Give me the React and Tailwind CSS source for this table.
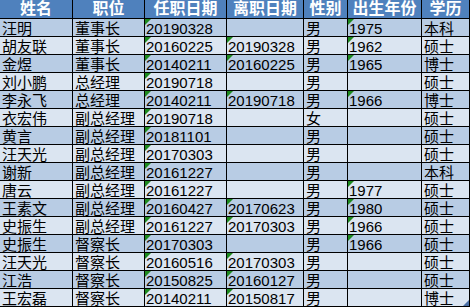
const headers = ['姓名', '职位', '任职日期', '离职日期', '性别', '出生年份', '学历']

const rows = [
  ['汪明', '董事长', '20190328', '', '男', '1975', '本科'],
  ['胡友联', '董事长', '20160225', '20190328', '男', '1962', '硕士'],
  ['金煜', '董事长', '20140211', '20160225', '男', '1965', '博士'],
  ['刘小鹏', '总经理', '20190718', '', '男', '', '硕士'],
  ['李永飞', '总经理', '20140211', '20190718', '男', '1966', '博士'],
  ['衣宏伟', '副总经理', '20190718', '', '女', '', '硕士'],
  ['黄言', '副总经理', '20181101', '', '男', '', '硕士'],
  ['汪天光', '副总经理', '20170303', '', '男', '', '硕士'],
  ['谢新', '副总经理', '20161227', '', '男', '', '本科'],
  ['唐云', '副总经理', '20161227', '', '男', '1977', '硕士'],
  ['王素文', '副总经理', '20160427', '20170623', '男', '1980', '硕士'],
  ['史振生', '副总经理', '20161227', '20170303', '男', '1966', '硕士'],
  ['史振生', '督察长', '20170303', '', '男', '1966', '硕士'],
  ['汪天光', '督察长', '20160516', '20170303', '男', '', '硕士'],
  ['江浩', '督察长', '20150825', '20160127', '男', '', '硕士'],
  ['王宏磊', '督察长', '20140211', '20150817', '男', '', '博士'],
]

// number-as-text columns get the little green marker
const textNumCols = [2, 3, 5]

const Flag = () => (
  <svg className="absolute left-0 top-0" width="6" height="6" viewBox="0 0 6 6">
    <polygon points="0,0 6,0 0,6" fill="#1e8a1e" />
  </svg>
)

export default function App() {
  return (
    <div className="relative w-[471px] h-[307px] bg-white overflow-hidden">
      <div
        className="grid w-[470px] gap-px bg-black border-r border-b border-black text-[15px] leading-[16px] text-black"
        style={{ fontFamily: '"Liberation Sans", "Noto Sans CJK SC", sans-serif' }}
      >
        <div className="grid grid-cols-[72px_71px_81px_76px_43px_73px_47px] gap-px">
          {headers.map((h) => (
            <div
              key={h}
              className="h-[18px] bg-[#4f81bd] text-white font-bold text-center text-[16px] leading-[18px]"
            >
              {h}
            </div>
          ))}
        </div>
        {rows.map((r, i) => (
          <div key={i} className="grid grid-cols-[72px_71px_81px_76px_43px_73px_47px] gap-px">
            {r.map((c, j) => (
              <div
                key={j}
                className={`relative h-[17px] pt-[2px] whitespace-nowrap overflow-hidden ${
                  textNumCols.includes(j) ? 'pl-[1px]' : 'pl-[2px]'
                } ${i % 2 === 0 ? 'bg-[#b8cce4]' : 'bg-[#dbe5f1]'}`}
              >
                {c && textNumCols.includes(j) && <Flag />}
                {c}
              </div>
            ))}
          </div>
        ))}
      </div>
      <svg className="absolute left-[463px] top-[300px]" width="6" height="6" viewBox="0 0 6 6">
        <polygon points="6,0 6,6 0,6" fill="#4a6fa5" />
      </svg>
    </div>
  )
}
